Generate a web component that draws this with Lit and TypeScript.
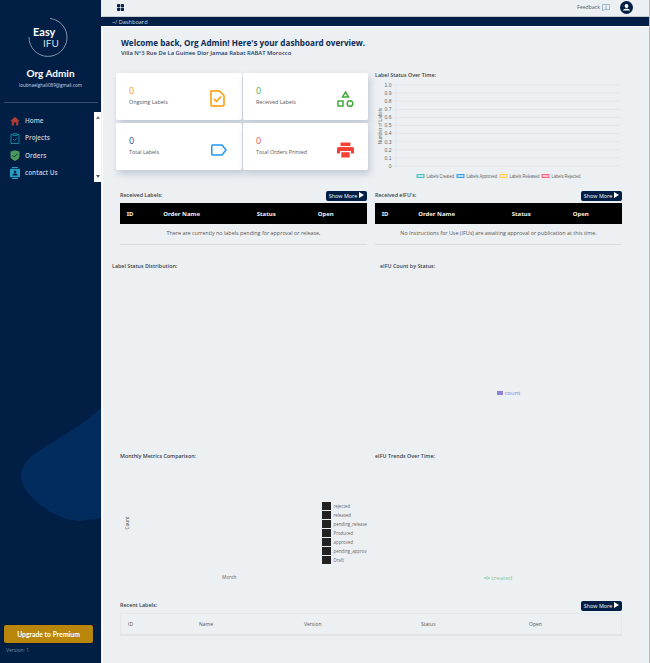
import { LitElement, css, html, svg } from 'lit';
import { customElement } from 'lit/decorators.js';

const ticks = ['1.0', '0.9', '0.8', '0.7', '0.6', '0.5', '0.4', '0.3', '0.2', '0.1', '0'];

const legend = [
  { label: 'Labels Created', x: 42, w: 27.5, fill: '#bfe6e6', stroke: '#4bc0c0' },
  { label: 'Labels Approved', x: 82, w: 30.5, fill: '#b5d9f3', stroke: '#36a2eb' },
  { label: 'Labels Released', x: 125, w: 30, fill: '#fdeac0', stroke: '#ffce56' },
  { label: 'Labels Rejected', x: 167, w: 29, fill: '#fbc4d0', stroke: '#ff6384' },
];

const monthly = ['rejected', 'released', 'pending_release', 'Produced', 'approved', 'pending_approv', 'Draft'];

const showMore = html`<button class="more">Show More <svg width="5" height="6" viewBox="0 0 5 6"><path d="M0 0l5 3-5 3z" fill="#fff"/></svg></button>`;

@customElement('app-root')
export class AppRoot extends LitElement {
  static styles = css`
    :host {
      display: flex;
      width: 650px;
      height: 663px;
      overflow: hidden;
      background: #fff;
      font-family: 'Open Sans', 'Noto Sans', sans-serif;
      color: #333;
    }

    /* sidebar */
    .side {
      position: relative;
      flex: none;
      width: 101px;
      height: 663px;
      box-sizing: border-box;
      background: #011f45;
      display: flex;
      flex-direction: column;
      overflow: hidden;
      color: #fff;
    }
    .blob {
      position: absolute;
      left: 0;
      top: 400px;
    }
    .logo {
      position: relative;
      height: 66px;
    }
    .logo svg {
      position: absolute;
      left: 0;
      top: 0;
    }
    .logo b {
      position: absolute;
      left: 33px;
      top: 25px;
      font: 700 11px/14px 'Lato', sans-serif;
    }
    .logo span {
      position: absolute;
      left: 43px;
      top: 37px;
      font: 400 10px/13px 'Lato', sans-serif;
      color: #d8dee6;
    }
    .name {
      text-align: center;
      font: 700 10px/12px 'Lato', sans-serif;
      width: 101px;
      margin-top: 1px;
    }
    .mail {
      text-align: center;
      font: 400 4.6px/7px 'Open Sans', sans-serif;
      color: #cdd6e2;
      margin-top: 3px;
    }
    .rule {
      height: 1px;
      background: #3b4d68;
      margin: 13px 3px 0 4px;
    }
    .menu {
      position: relative;
      margin-top: 9px;
      height: 70px;
      padding-left: 10px;
      display: flex;
      flex-direction: column;
    }
    .item {
      height: 17.5px;
      display: flex;
      align-items: center;
      gap: 5px;
      font: 600 6.4px/10px 'Open Sans', sans-serif;
      color: #c8ced8;
    }
    .item svg {
      flex: none;
    }
    .scroll {
      position: absolute;
      right: 0;
      top: 0;
      width: 7px;
      height: 70px;
      background: #fff;
      display: flex;
      flex-direction: column;
      justify-content: space-between;
      align-items: center;
      padding: 4px 0;
      box-sizing: border-box;
    }
    .spacer {
      flex: 1;
    }
    .premium {
      position: relative;
      margin: 0 8px 0 4px;
      height: 18px;
      border: 0;
      border-radius: 2px;
      background: #b8860b;
      color: #fff;
      font: 700 6.8px/18px 'Lato', sans-serif;
      box-shadow: 0 0 2px rgba(0, 0, 0, 0.6);
      padding: 0;
    }
    .version {
      position: relative;
      margin: 4px 0 9px 6px;
      font: 400 5px/7px 'Open Sans', sans-serif;
      color: #7f8ea3;
    }

    /* main column */
    .main {
      flex: 1;
      min-width: 0;
      display: flex;
      flex-direction: column;
      border-right: 1px solid #b9b4b8;
      background: #edf0f3;
    }
    .top {
      height: 17px;
      flex: none;
      box-sizing: border-box;
      margin-left: 1px;
      padding: 0 16px 2px 15px;
      display: flex;
      align-items: center;
      justify-content: space-between;
      border-bottom: 1px solid #c8cbd0;
    }
    .top-right {
      display: flex;
      align-items: center;
    }
    .feedback {
      font: 400 5.2px/8px 'Open Sans', sans-serif;
      color: #555;
      margin-right: 2px;
    }
    .avatar {
      margin-left: 10px;
    }
    .crumb {
      height: 9px;
      flex: none;
      box-sizing: border-box;
      padding: 1px 0 0 11px;
      background: #011f45;
      color: #d6dce5;
      font: 500 5.6px/8px 'Open Sans', sans-serif;
    }
    .body {
      flex: 1;
      margin-left: 1px;
      border-left: 1px solid #fff;
      border-top: 1px solid #fff;
      padding: 0 0 0 13px;
      display: flex;
      flex-direction: column;
    }
    h1 {
      margin: 10px 0 0 5px;
      font: 700 8.15px/12px 'Open Sans', sans-serif;
      color: #0c2a55;
      white-space: nowrap;
    }
    .addr {
      margin: 0 0 0 5px;
      font: 600 5.8px/8px 'Open Sans', sans-serif;
      color: #1d3a66;
    }
    .row {
      display: flex;
    }
    .left {
      width: 252px;
      flex: none;
    }
    .right {
      width: 247px;
      flex: none;
      margin-left: 7px;
    }
    .cards {
      display: grid;
      grid-template-columns: 126px 125px;
      grid-auto-rows: 47px;
      gap: 3px 1px;
    }
    .card {
      background: #fff;
      border-radius: 2px;
      box-shadow: 2px 4px 7px rgba(90, 110, 140, 0.3);
      padding: 13px 14px 0 13px;
      box-sizing: border-box;
      display: flex;
      justify-content: space-between;
      align-items: flex-start;
    }
    .num {
      font: 400 9px/10px 'Open Sans', sans-serif;
    }
    .lab {
      font: 500 5.4px/8px 'Open Sans', sans-serif;
      color: #555;
      margin-top: 2px;
    }
    .title {
      font: 600 5.35px/8px 'Open Sans', sans-serif;
      color: #3a3f46;
    }
    .chart {
      display: block;
    }
    .chart text {
      font: 400 5px 'Liberation Sans', sans-serif;
      fill: #666;
    }
    .chart .small {
      font-size: 4.6px;
    }
    .panel-head {
      display: flex;
      justify-content: space-between;
      align-items: flex-start;
      height: 12px;
    }
    .more {
      width: 41.5px;
      height: 10px;
      border: 0;
      padding: 0;
      border-radius: 2px;
      background: #011f45;
      color: #fff;
      font: 500 5.4px/10px 'Open Sans', sans-serif;
      white-space: nowrap;
    }
    .thead {
      display: grid;
      height: 21px;
      align-items: center;
      background: #000;
      color: #f2f2f2;
      font: 700 6px/8px 'Noto Sans', sans-serif;
      grid-template-columns: 36.5px 93.5px 61px 1fr;
      padding-left: 6.7px;
    }
    .empty {
      height: 20px;
      border-bottom: 1px solid #d9dce0;
      text-align: center;
      font: 400 5.4px/19px 'Open Sans', sans-serif;
      color: #555;
    }
    .sect {
      height: 190px;
      position: relative;
    }
    .short {
      height: 145px;
    }
    .legend-count {
      position: absolute;
      left: 121.500px;
      top: 127px;
      display: flex;
      align-items: center;
      gap: 2px;
      font: 400 6px/8px 'Open Sans', sans-serif;
      color: #8884d8;
    }
    .legend-count i {
      width: 6px;
      height: 4px;
      background: #8884d8;
    }
    .legend-created {
      position: absolute;
      left: 109px;
      top: 122px;
      display: flex;
      align-items: center;
      gap: 1px;
      font: 400 6px/8px 'Open Sans', sans-serif;
      color: #82ca9d;
    }
    .monthly {
      position: absolute;
      left: 206px;
      top: 50px;
      display: flex;
      flex-direction: column;
      gap: 1px;
    }
    .monthly div {
      display: flex;
      align-items: center;
      gap: 3px;
      height: 8px;
      font: 400 4.4px/8px 'Open Sans', sans-serif;
      color: #666;
      white-space: nowrap;
    }
    .monthly i {
      width: 8.500px;
      height: 8px;
      background: #222;
      flex: none;
    }
    .axis-y {
      position: absolute;
      left: 5px;
      top: 68px;
      transform: rotate(-90deg);
      font: 400 4.6px/6px 'Open Sans', sans-serif;
      color: #444;
    }
    .axis-x {
      position: absolute;
      left: 106px;
      top: 122px;
      font: 400 4.7px/6px 'Open Sans', sans-serif;
      color: #666;
    }
    .recent {
      width: 502px;
      margin: 4px 0 0 4px;
    }
    .recent .rows {
      display: grid;
      grid-template-columns: 71px 105px 117px 108px 1fr;
      align-items: center;
      height: 23px;
      padding-left: 7px;
      box-sizing: border-box;
      border: 1px solid #e4e7eb;
      border-bottom: 2px solid #e2e4ea;
      font: 400 5px/8px 'Open Sans', sans-serif;
      color: #555;
    }
  `;

  private lineChart() {
    return html`<svg class="chart" width="247" height="107" viewBox="0 0 247 107">
      <text class="small" transform="translate(7 46) rotate(-90)" text-anchor="middle">Number of Labels</text>
      ${ticks.map((t, i) => {
        const y = 5 + i * 8.1;
        return svg`<line x1="18" x2="245" y1=${y} y2=${y} stroke="#dfe2e6" stroke-width="0.8"></line>
          <text x="16.500" y=${y + 1.8} text-anchor="end">${t}</text>`;
      })}
      <line x1="21" x2="21" y1="5" y2="87" stroke="#dfe2e6" stroke-width="0.8"></line>
      ${legend.map(
        (l) => svg`<rect x=${l.x} y="94.500" width="7" height="3" fill=${l.fill} stroke=${l.stroke} stroke-width="1"></rect>
          <text class="small" x=${l.x + 9.5} y="98" textLength=${l.w} lengthAdjust="spacingAndGlyphs">${l.label}</text>`,
      )}
    </svg>`;
  }

  render() {
    return html`
      <aside class="side">
        <svg class="blob" width="101" height="130" viewBox="0 0 101 130">
          <path d="M101 8C80 28 45 45 32 56 20 66 19 78 24 87 34 104 60 121 80 121L101 118Z" fill="#022c5e"/>
        </svg>
        <div class="logo">
          <svg width="101" height="66" viewBox="0 0 101 66" fill="none">
            <path d="M50 18.500A19 19 0 1 1 29 37" stroke="#b9c3d1" stroke-width="0.7"/>
          </svg>
          <b>Easy</b><span>IFU</span>
        </div>
        <div class="name">Org Admin</div>
        <div class="mail">loubnaelghali089@gmail.com</div>
        <div class="rule"></div>
        <nav class="menu">
          <div class="item">
            <svg width="10" height="10" viewBox="0 0 10 10"><path d="M5 .8L.3 5h1.400v4.400h2.200V6.600h2.200v2.800h2.200V5h1.400z" fill="#b03a36"/></svg>Home
          </div>
          <div class="item">
            <svg width="10" height="11" viewBox="0 0 10 11" fill="none" stroke="#128196" stroke-width="1"><path d="M3 1.500H1v9h8v-9H7M3 .7h4v1.800H3z"/><path d="M3 6l1.500 1.500L7 4.800" stroke-width=".8"/></svg>Projects
          </div>
          <div class="item">
            <svg width="10" height="11" viewBox="0 0 10 11"><path d="M.5 1.500L5 .3l4.500 1.200V6c0 2.500-2 4-4.500 4.900C2.500 10 .5 8.500 .5 6z" fill="#4c9a5c"/><path d="M2.800 5.300l1.600 1.600 3-3" stroke="#0a2a4a" fill="none" stroke-width="1"/></svg>Orders
          </div>
          <div class="item">
            <svg width="10" height="12" viewBox="0 0 10 12"><path d="M2 0h6v1H2zM2 11h6v1H2z" fill="#2a9dc0"/><rect y="1.800" width="10" height="8.400" rx=".6" fill="#2a9dc0"/><circle cx="5" cy="4.700" r="1.300" fill="#06264c"/><path d="M2.400 8.500c0-3 5.200-3 5.200 0z" fill="#06264c"/></svg>contact Us
          </div>
          <div class="scroll">
            <svg width="4" height="3" viewBox="0 0 4 3"><path d="M2 0l2 3H0z" fill="#777"/></svg>
            <svg width="4" height="3" viewBox="0 0 4 3"><path d="M2 3l2-3H0z" fill="#555"/></svg>
          </div>
        </nav>
        <div class="spacer"></div>
        <button class="premium">Upgrade to Premium</button>
        <div class="version">Version: 1</div>
      </aside>

      <div class="main">
        <header class="top">
          <svg width="7" height="7" viewBox="0 0 7 7" fill="#0a2348"><rect width="3.200" height="3.200" rx=".8"/><rect x="3.800" width="3.200" height="3.200" rx=".8"/><rect y="3.800" width="3.200" height="3.200" rx=".8"/><rect x="3.800" y="3.800" width="3.200" height="3.200" rx=".8"/></svg>
          <div class="top-right">
            <span class="feedback">Feedback</span>
            <svg width="8" height="7" viewBox="0 0 8 7" fill="none" stroke="#7f9fc4" stroke-width=".7"><path d="M.5.5h7v5H2.500L.5 6.800zM4 .5v5"/></svg>
            <svg class="avatar" width="13" height="13" viewBox="0 0 13 13"><circle cx="6.500" cy="6.500" r="6.500" fill="#011f45"/><circle cx="6.500" cy="5" r="1.900" fill="#fff"/><path d="M3 9.500c0-2.300 7-2.300 7 0z" fill="#fff"/></svg>
          </div>
        </header>
        <div class="crumb">~/ Dashboard</div>
        <div class="body">
          <h1>Welcome back, Org Admin! Here's your dashboard overview.</h1>
          <p class="addr">Villa N°3 Rue De La Guinee Dior Jamaa Rabat RABAT Morocco</p>

          <div class="row" style="margin-top:16px">
            <div class="left">
              <div class="cards">
                <div class="card">
                  <div><div class="num" style="color:#f39c12">0</div><div class="lab">Ongoing Labels</div></div>
                  <svg style="margin:4px 3px 0 0" width="15" height="17" viewBox="0 0 15 17" fill="none" stroke="#ff9800" stroke-width="1.500"><path d="M1 1h8.500L14 5.500V15a1 1 0 0 1-1 1H2a1 1 0 0 1-1-1z"/><path d="M4 9l2.500 2.500L11 6.500"/></svg>
                </div>
                <div class="card">
                  <div><div class="num" style="color:#4caf50">0</div><div class="lab">Received Labels</div></div>
                  <svg style="margin-top:5px" width="17" height="16" viewBox="0 0 17 16" fill="none" stroke="#43a83f" stroke-width="1.500"><path d="M8.500 1l3 5h-6z"/><rect x="1" y="10" width="5" height="5"/><circle cx="13" cy="12.500" r="2.800"/></svg>
                </div>
                <div class="card">
                  <div><div class="num" style="color:#1d4f91">0</div><div class="lab">Total Labels</div></div>
                  <svg style="margin:8px 1px 0 0" width="16" height="12" viewBox="0 0 16 12" fill="none" stroke="#2196f3" stroke-width="1.500"><path d="M1.500 1H11l4 5-4 5H1.500a.7.7 0 0 1-.7-.7V1.700a.7.7 0 0 1 .7-.7z"/></svg>
                </div>
                <div class="card">
                  <div><div class="num" style="color:#d9534f">0</div><div class="lab">Total Orders Printed</div></div>
                  <svg style="margin-top:6px" width="17" height="16" viewBox="0 0 17 15" fill="#f44336"><path d="M3.500 0h10v3.500h-10z"/><path d="M1.500 4.500h14A1.500 1.500 0 0 1 17 6v5h-3V8.500H3V11H0V6a1.500 1.500 0 0 1 1.500-1.500z"/><path d="M4.300 9.700h8.400V15H4.300z"/></svg>
                </div>
              </div>
            </div>
            <div class="right" style="margin-top:-2px;height:114px">
              <div class="title" style="height:9px">Label Status Over Time:</div>
              ${this.lineChart()}
            </div>
          </div>

          <div class="row" style="margin-top:6px">
            <div class="left" style="padding:0 1px 0 4px;box-sizing:border-box">
              <div class="panel-head"><span class="title">Received Labels:</span>${showMore}</div>
              <div class="thead"><span>ID</span><span>Order Name</span><span>Status</span><span>Open</span></div>
              <div class="empty">There are currently no labels pending for approval or release,</div>
            </div>
            <div class="right">
              <div class="panel-head"><span class="title">Received eIFU's:</span>${showMore}</div>
              <div class="thead"><span>ID</span><span>Order Name</span><span>Status</span><span>Open</span></div>
              <div class="empty">No Instructions for Use (IFUs) are awaiting approval or publication at this time.</div>
            </div>
          </div>

          <div class="row" style="margin-top:17px">
            <div class="left sect">
              <div class="title" style="margin-left:-4px">Label Status Distribution:</div>
            </div>
            <div class="right sect">
              <div class="title" style="margin-left:5px">eIFU Count by Status:</div>
              <div class="legend-count"><i></i>count</div>
            </div>
          </div>

          <div class="row">
            <div class="left sect short">
              <div class="title" style="margin-left:4px">Monthly Metrics Comparison:</div>
              <div class="axis-y">Count</div>
              <div class="axis-x">Month</div>
              <div class="monthly">
                ${monthly.map((m) => html`<div><i></i>${m}</div>`)}
              </div>
            </div>
            <div class="right sect short">
              <div class="title">eIFU Trends Over Time:</div>
              <div class="legend-created">
                <svg width="6" height="4" viewBox="0 0 6 4"><path d="M0 2h6" stroke="#82ca9d"/><circle cx="3" cy="2" r="1.300" fill="#edf0f3" stroke="#82ca9d" stroke-width=".6"/></svg>created
              </div>
            </div>
          </div>

          <div class="recent">
            <div class="panel-head"><span class="title">Recent Labels:</span>${showMore}</div>
            <div class="rows"><span>ID</span><span>Name</span><span>Version</span><span>Status</span><span>Open</span></div>
          </div>
        </div>
      </div>
    `;
  }
}

declare global {
  interface HTMLElementTagNameMap {
    'app-root': AppRoot;
  }
}
